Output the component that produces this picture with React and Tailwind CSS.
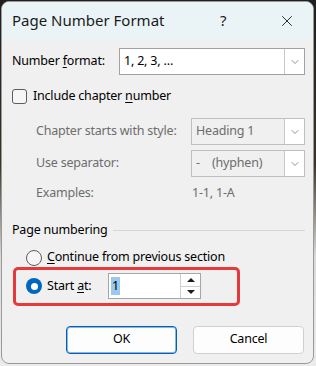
import { ChevronDown, X } from "lucide-react"

function Combo({ value, disabled, className }) {
    return (
        <div
            className={`flex h-[27px] border ${
                disabled ? "border-[#bfbfbf] bg-[#f0f0f0] text-[#6d6d6d]" : "border-[#a0a0a0] bg-white text-black"
            } ${className}`}
        >
            <div className="flex-1 flex items-center pl-[4px] whitespace-pre">{value}</div>
            <div className="w-[20px] flex items-center justify-center bg-white border-l border-[#c8c8c8]">
                <ChevronDown size={12} strokeWidth={1.4} className="text-[#606060]" />
            </div>
        </div>
    )
}

function Radio({ checked }) {
    if (checked) {
        return (
            <div className="w-[16px] h-[16px] rounded-full bg-[#0067c0] flex items-center justify-center shrink-0">
                <div className="w-[7px] h-[7px] rounded-full bg-white" />
            </div>
        )
    }
    return <div className="w-[16px] h-[16px] rounded-full border border-[#5d5d5d] bg-[#f6f6f6] shrink-0" />
}

export default function App() {
    return (
        <div
            className="w-[316px] h-[366px] bg-[linear-gradient(180deg,#1f1f1f_0%,#3a3526_45%,#d9d9d9_70%,#ececec_100%)] pl-[1px] pt-[1px] text-[12.5px] tracking-[-0.2px] leading-none whitespace-nowrap"
            style={{ fontFamily: '"Noto Sans", "Open Sans", sans-serif' }}
        >
            <div className="w-[313px] h-[363px] rounded-[8px] border border-[#9a9a9a] bg-[#f0f0f0] overflow-hidden flex flex-col">
                {/* Title bar */}
                <div className="h-[37px] bg-[#eaf4f7] flex items-center pl-[10px] shrink-0 tracking-normal">
                    <span className="text-[15px] text-[#1b1b1b] flex-1">Page Number Format</span>
                    <span className="text-[15px] text-[#1b1b1b] w-[10px] mr-[48px]">?</span>
                    <X size={18} strokeWidth={1.2} className="text-[#1b1b1b] mr-[17px]" />
                </div>

                <div className="flex flex-col pl-[10px] pr-[8px]">
                    {/* Number format */}
                    <div className="flex items-center mt-[9px]">
                        <span className="w-[107px]">
                            Number <span className="underline underline-offset-2">f</span>ormat:
                        </span>
                        <Combo value="1, 2, 3, …" className="flex-1" />
                    </div>

                    {/* Chapter */}
                    <div className="flex items-center mt-[14px] gap-[6px]">
                        <div className="w-[15px] h-[15px] rounded-[3px] border border-[#5d5d5d] bg-[#f6f6f6]" />
                        <span>
                            Include chapter <span className="underline underline-offset-2">n</span>umber
                        </span>
                    </div>

                    <div className="flex flex-col pl-[24px] text-[#6d6d6d]">
                        <div className="flex items-center mt-[14px]">
                            <span className="w-[155px]">Chapter starts with style:</span>
                            <Combo value="Heading 1" disabled className="flex-1" />
                        </div>
                        <div className="flex items-center mt-[5px]">
                            <span className="w-[155px]">Use separator:</span>
                            <Combo value={"-    (hyphen)"} disabled className="flex-1" />
                        </div>
                        <div className="flex items-center mt-[9px] h-[15px]">
                            <span className="w-[156px]">Examples:</span>
                            <span>1-1, 1-A</span>
                        </div>
                    </div>

                    {/* Page numbering */}
                    <div className="flex items-center mt-[23px] gap-[6px]">
                        <span>Page numbering</span>
                        <div className="flex-1 h-px bg-[#d6d6d6]" />
                    </div>

                    <div className="flex items-center mt-[13px] ml-[14px] gap-[5px]">
                        <Radio />
                        <span>
                            <span className="underline underline-offset-2">C</span>ontinue from previous section
                        </span>
                    </div>

                    <div className="mt-[1px] ml-[1px] w-[227px] h-[39px] border-[3px] border-[#e5393b] rounded-[5px] flex items-center pl-[10px]">
                        <Radio checked />
                        <span className="ml-[5px] w-[61px]">
                            Start <span className="underline underline-offset-2">a</span>t:
                        </span>
                        <div className="w-[93px] h-[26px] border border-[#a6a6a6] bg-white flex">
                            <div className="flex-1 flex items-center pl-[2px]">
                                <span className="bg-[#99c9ef] px-[1px] h-[18px] flex items-center">1</span>
                            </div>
                            <div className="w-[20px] flex flex-col">
                                <div className="flex-1 border-l border-b border-[#cfcfcf] flex items-center justify-center">
                                    <div className="w-0 h-0 border-l-[4px] border-r-[4px] border-b-[4px] border-l-transparent border-r-transparent border-b-[#1b1b1b]" />
                                </div>
                                <div className="flex-1 border-l border-[#cfcfcf] flex items-center justify-center">
                                    <div className="w-0 h-0 border-l-[4px] border-r-[4px] border-t-[4px] border-l-transparent border-r-transparent border-t-[#1b1b1b]" />
                                </div>
                            </div>
                        </div>
                    </div>

                    {/* Buttons */}
                    <div className="flex justify-end gap-[16px] mt-[20px] pr-[1px]">
                        <button className="w-[111px] h-[28px] rounded-[4px] bg-[#fdfdfd] border border-[#005fb8] shadow-[inset_0_0_0_1px_rgba(0,95,184,0.45)] text-black">
                            OK
                        </button>
                        <button className="w-[111px] h-[28px] rounded-[4px] bg-[#fdfdfd] border border-[#d0d0d0] text-black">
                            Cancel
                        </button>
                    </div>
                </div>
            </div>
        </div>
    )
}
